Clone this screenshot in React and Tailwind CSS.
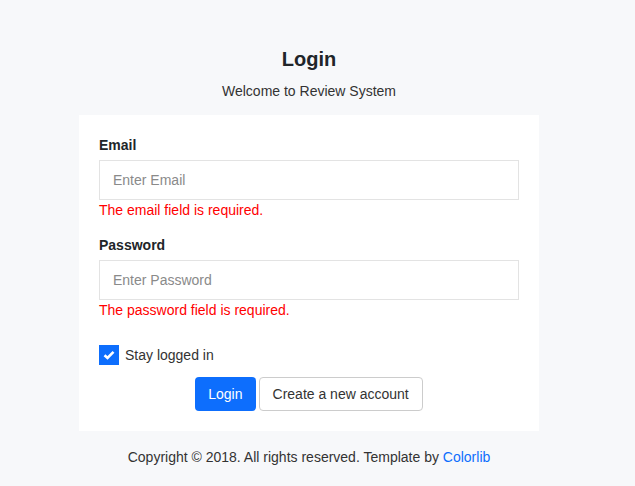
export default function App() {
  return (
    <div className="min-h-[486px] bg-[#f7f8fa] font-['Liberation_Sans',Arial,sans-serif] text-[#212529]">
      <div className="w-[618px] flex flex-col items-center">
        {/* Header */}
        <h1 className="mt-[46px] text-[20px] leading-[26px] font-bold text-[#212529]">Login</h1>
        <p className="mt-[10px] text-[14px] leading-[18px] text-[#333]">Welcome to Review System</p>

        {/* Card */}
        <div className="mt-[15px] w-[460px] bg-white px-[20px] pt-[21px] pb-[20px]">
          <label className="block text-[14px] leading-[18px] font-bold text-[#212529]">Email</label>
          <input
            placeholder="Enter Email"
            className="mt-[6px] block w-full h-[40px] border border-[#e3e3e3] px-[13px] text-[14px] placeholder:text-[#8a8a8a] outline-none"
          />
          <p className="mt-[1px] text-[14px] leading-[18px] text-[#f00]">The email field is required.</p>

          <label className="mt-[17px] block text-[14px] leading-[18px] font-bold text-[#212529]">Password</label>
          <input
            type="password"
            placeholder="Enter Password"
            className="mt-[6px] block w-full h-[40px] border border-[#e3e3e3] px-[13px] text-[14px] placeholder:text-[#8a8a8a] outline-none"
          />
          <p className="mt-[1px] text-[14px] leading-[18px] text-[#f00]">The password field is required.</p>

          <div className="mt-[26px] flex items-center gap-[6px]">
            <span className="w-[20px] h-[20px] bg-[#0d6efd] flex items-center justify-center">
              <svg width="12" height="10" viewBox="0 0 12 10">
                <path d="M1.5 5.2 L4.5 8 L10.5 1.8" stroke="white" strokeWidth="2.6" fill="none" />
              </svg>
            </span>
            <span className="text-[14px] leading-[18px] text-[#333]">Stay logged in</span>
          </div>

          <div className="mt-[12px] flex justify-center gap-[3px]">
            <button className="h-[34px] px-[13px] rounded-[4px] bg-[#0d6efd] text-white text-[14px]">Login</button>
            <button className="h-[34px] px-[13px] rounded-[4px] bg-white border border-[#ccc] text-[#333] text-[14px]">
              Create a new account
            </button>
          </div>
        </div>

        {/* Footer */}
        <p className="mt-[17px] text-[14px] leading-[18px] text-[#333]">
          Copyright © 2018. All rights reserved. Template by <span className="text-[#0d6efd]">Colorlib</span>
        </p>
      </div>
    </div>
  )
}
